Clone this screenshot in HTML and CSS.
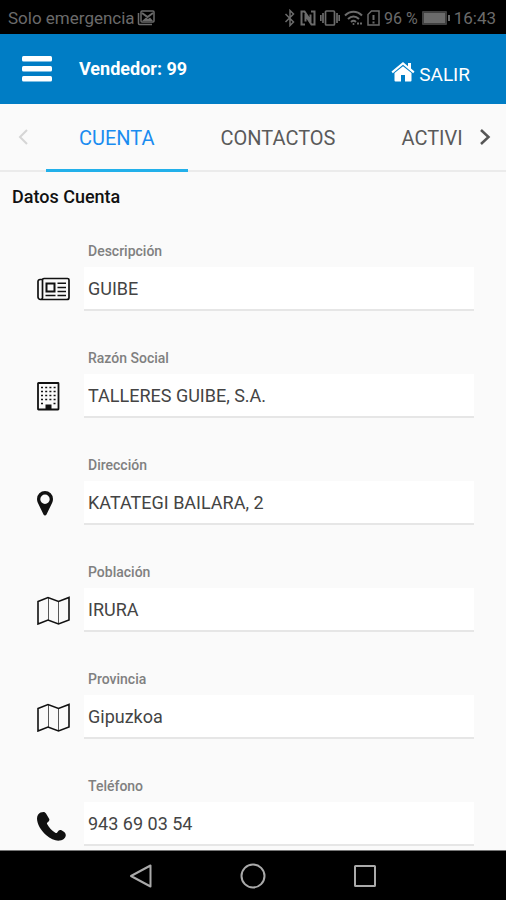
FILE: index.html
```html
<!DOCTYPE html>
<html lang="es">
<head>
<meta charset="utf-8">
<meta name="viewport" content="width=device-width, initial-scale=1">
<title>Datos Cuenta</title>
<link rel="stylesheet" href="styles.css">
</head>
<body>
<div class="status">
  <span>Solo emergencia</span>
  <svg class="status-mail" width="18" height="16" viewBox="0 0 18 16" fill="none" stroke="currentColor" stroke-width="1.500"><rect x="4" y="1" width="13" height="11" rx="1"/><path d="M1.500 3v10.500a1 1 0 0 0 1 1H15"/><path d="M5 3l5.500 4L16 3" stroke-width="2"/><path d="M5 11l4-3.500 2 1.500 2-1.500 3 3.500z" fill="currentColor" stroke="none"/></svg>
  <div class="status-right">
    <svg width="12" height="18" viewBox="0 0 12 18" fill="none" stroke="currentColor" stroke-width="1.500"><path d="M1.500 5l8 8L6 16.500v-15L9.500 5l-8 8"/></svg>
    <svg width="16" height="16" viewBox="0 0 16 16" fill="none" stroke="currentColor"><path d="M5 14.500H1.500v-13H4.500l6 9V4.500M11 1.500h3.500v13h-3l-6-9V11.500" stroke-width="2"/></svg>
    <svg width="20" height="16" viewBox="0 0 20 16" fill="none" stroke="currentColor" stroke-width="1.700"><rect x="5.500" y="1" width="9" height="14" rx="1"/><path d="M3 3v10M17 3v10M.8 5v6M19.200 5v6"/></svg>
    <svg width="19" height="16" viewBox="0 0 19 16" fill="none" stroke="currentColor" stroke-width="2"><path d="M1 5.500c5-5 12-5 17 0M4 9c3.500-3.500 7.500-3.500 11 0M7 12c2-1.800 3-1.800 5 0"/><circle cx="9.500" cy="14" r="1" fill="currentColor" stroke="none"/><path d="M13 13.500h2M16 13.500h2"/></svg>
    <svg width="13" height="16" viewBox="0 0 13 16" fill="none" stroke="currentColor" stroke-width="1.500"><path d="M4.500 1H12v14H1V4.500z"/><path d="M6.500 5v5M6.500 11.500v2" stroke-width="2"/></svg>
    <span class="battery-text">96 %</span>
    <svg class="battery" width="28" height="14" viewBox="0 0 28 14" fill="currentColor"><rect width="25" height="14" rx="1" opacity=".6"/><rect x="2" y="2" width="21" height="10"/><rect x="26" y="4" width="2" height="6"/></svg>
    <span>16:43</span>
  </div>
</div>
<header class="bar">
  <button class="menu" aria-label="Menú"><svg width="30" height="26" viewBox="0 0 30 26" fill="#fff"><rect y="0" width="30" height="5.500" rx="1.500"/><rect y="10" width="30" height="5.500" rx="1.500"/><rect y="20" width="30" height="5.500" rx="1.500"/></svg></button>
  <h1 class="seller">Vendedor: 99</h1>
  <a class="exit" href="#"><svg width="24" height="20" viewBox="0 0 24 20" fill="#fff"><path d="M12 4.200L3.500 11v7.500a1 1 0 0 0 1 1H10V13h4v6.500h5.500a1 1 0 0 0 1-1V11z"/><path d="M12 0L.5 9.600l1.300 1.600L12 2.800l10.200 8.400 1.300-1.600L20 6.600V1h-3v3.200z"/></svg><span>SALIR</span></a>
</header>
<nav class="tabs">
  <button class="arrow arrow-off" aria-label="Anterior"><svg width="12" height="18" viewBox="0 0 12 18" fill="none" stroke="currentColor" stroke-width="2"><path d="M10 2L3 9l7 7"/></svg></button>
  <div class="tab-list">
    <a class="tab tab-on" href="#">CUENTA</a>
    <a class="tab" href="#">CONTACTOS</a>
    <a class="tab" href="#">ACTIVI</a>
  </div>
  <button class="arrow arrow-next" aria-label="Siguiente"><svg width="12" height="18" viewBox="0 0 12 18" fill="none" stroke="currentColor" stroke-width="2.500"><path d="M2 2l7.500 7L2 16"/></svg></button>
</nav>
<main class="content">
  <h2 class="title">Datos Cuenta</h2>
  <form class="fields">
    <div class="field">
      <svg class="icon" width="33" height="24" viewBox="0 0 33 24" fill="none" stroke="currentColor"><path d="M5 2.500H3a2 2 0 0 0-2 2V20a2.500 2.500 0 0 0 2.500 2.500H30a2 2 0 0 0 2-2V3a1.500 1.500 0 0 0-1.500-1.500H7A1.500 1.500 0 0 0 5.500 3v17a2 2 0 0 1-2 2.500" stroke-width="1.700"/><rect x="9.500" y="6.500" width="8" height="8" stroke-width="2"/><path d="M20.500 6.200H29M20.500 10.500H29M20.500 14.500H29M8.500 18.500h10M20.500 18.500H29" stroke-width="1.500"/></svg>
      <label for="descripcion">Descripción</label>
      <input id="descripcion" type="text" value="GUIBE">
    </div>
    <div class="field">
      <svg class="icon" width="23" height="29" viewBox="0 0 23 29" fill="none" stroke="currentColor"><rect x="1" y="1" width="20.500" height="26.500" rx=".5" stroke-width="1.800"/><path d="M4 5.500h15M4 9.500h15M4 13.500h15M4 17.500h15" stroke-width="1.600" stroke-dasharray="2 2.200"/><path d="M4 21.500h3M16.500 21.500h3" stroke-width="1.600" stroke-dasharray="2 2"/><path d="M8.500 28v-5.500h6V28z" fill="currentColor" stroke="none"/></svg>
      <label for="razon">Razón Social</label>
      <input id="razon" type="text" value="TALLERES GUIBE, S.A.">
    </div>
    <div class="field">
      <svg class="icon" width="16" height="25" viewBox="0 0 16 25" fill="currentColor"><path fill-rule="evenodd" d="M8 0a8 8 0 0 0-8 8c0 1.500.3 2.600.8 3.700L6.500 23.500a1.700 1.700 0 0 0 3 0l5.700-11.800c.5-1.100.8-2.200.8-3.700a8 8 0 0 0-8-8zm0 3.600a4.700 4.700 0 1 1 0 9.400 4.700 4.700 0 0 1 0-9.400z"/></svg>
      <label for="direccion">Dirección</label>
      <input id="direccion" type="text" value="KATATEGI BAILARA, 2">
    </div>
    <div class="field">
      <svg class="icon" width="33" height="29" viewBox="0 0 33 29" fill="none" stroke="currentColor"><path d="M1 5.500L11 1.500l10.500 4 10.500-4V24l-10.500 4L11 24 1 28z" stroke-width="1.600"/><path d="M11.500 2v22M21.500 6v21.500" stroke-width=".7"/></svg>
      <label for="poblacion">Población</label>
      <input id="poblacion" type="text" value="IRURA">
    </div>
    <div class="field">
      <svg class="icon" width="33" height="29" viewBox="0 0 33 29" fill="none" stroke="currentColor"><path d="M1 5.500L11 1.500l10.500 4 10.500-4V24l-10.500 4L11 24 1 28z" stroke-width="1.600"/><path d="M11.500 2v22M21.500 6v21.500" stroke-width=".7"/></svg>
      <label for="provincia">Provincia</label>
      <input id="provincia" type="text" value="Gipuzkoa">
    </div>
    <div class="field">
      <svg class="icon" width="29" height="34" viewBox="0 -5 29 34" fill="currentColor"><path d="M3.500.6C1.500 1.500 0 3.700 0 6.500 0 12 4 18.500 9 23c5 4.300 10 6.300 14 5.600 3-.5 5.300-2.300 5.700-4.600.2-1.500-.2-3-1.500-4l-2.700-1.700c-1-.6-2.300-.4-3 .5l-1.300 1.700c-.5.600-1.200.7-1.900.3-3.400-2-6.400-5.100-8.200-8.700-.3-.7-.2-1.200.3-1.700l1.200-1c.8-.7 1-1.700.5-2.700L9 1.600C8.500.6 7.500 0 6.500 0c-1 0-2 .2-3 .6z"/></svg>
      <label for="telefono">Teléfono</label>
      <input id="telefono" type="tel" value="943 69 03 54">
    </div>
  </form>
</main>
<footer class="system-nav">
  <button aria-label="Atrás"><svg width="24" height="24" viewBox="0 0 24 24" fill="none" stroke="currentColor" stroke-width="2" stroke-linejoin="round"><path d="M21.500 1.500v21L2 12z"/></svg></button>
  <button aria-label="Inicio"><svg width="26" height="26" viewBox="0 0 26 26" fill="none" stroke="currentColor" stroke-width="2"><circle cx="13" cy="13" r="11.500"/></svg></button>
  <button aria-label="Recientes"><svg width="24" height="24" viewBox="0 0 24 24" fill="none" stroke="currentColor" stroke-width="2"><rect x="2" y="2" width="20" height="20" rx=".5"/></svg></button>
</footer>
</body>
</html>
```
FILE: styles.css
```css
* { box-sizing: border-box; }

body {
  margin: 0;
  height: 100vh;
  display: flex;
  flex-direction: column;
  background: #fafafa;
  color: #111;
  font-family: Roboto, "Liberation Sans", sans-serif;
}

button {
  display: flex;
  align-items: center;
  justify-content: center;
  padding: 0;
  border: 0;
  background: none;
  color: inherit;
}

a { color: inherit; text-decoration: none; }

svg { flex: none; display: block; }

.status {
  flex: none;
  display: flex;
  align-items: center;
  height: 34px;
  padding: 2px 10px 0 8px;
  background: #000;
  color: #6b6b6b;
  font-size: 17px;
}

.status-mail { margin-left: 2px; }

.status-right {
  display: flex;
  align-items: center;
  gap: 4px;
  margin-left: auto;
}

.battery-text { font-size: 16px; }

.bar {
  flex: none;
  display: flex;
  align-items: center;
  height: 70px;
  padding: 0 36px 0 22px;
  background: #007dc5;
  color: #fff;
}

.menu { width: 30px; height: 40px; }

.seller {
  margin: 0 0 0 27px;
  padding-bottom: 2px;
  font-size: 18px;
  font-weight: 700;
}

.exit {
  display: flex;
  align-items: center;
  gap: 4px;
  margin-left: auto;
  padding-top: 10px;
  font-size: 19px;
}

.exit svg { margin-bottom: 4px; }

.tabs {
  flex: none;
  display: flex;
  height: 68px;
  color: #5a5a5a;
}

.arrow {
  flex: none;
  width: 46px;
  color: #555;
  border-bottom: 2px solid #ebebeb;
}

.arrow-off { color: #d5d5d5; }

.arrow-next { width: 43px; }

.tab-list {
  flex: 1;
  display: flex;
  min-width: 0;
  overflow: hidden;
  box-shadow: inset 0 -2px #ebebeb;
}

.tab {
  flex: none;
  padding: 0 33px;
  font-size: 20px;
  line-height: 68px;
}

.tab-on {
  color: #1a8cf0;
  border-bottom: 3px solid #22b0ea;
}

.content {
  flex: 1;
  min-height: 0;
  overflow-y: auto;
  scrollbar-width: none;
  padding: 13px 32px 38px 12px;
}

.title {
  margin: 0 0 34px;
  font-size: 18px;
  font-weight: 500;
  line-height: 24px;
}

.fields {
  display: flex;
  flex-direction: column;
  gap: 39px;
  padding-left: 25px;
}

.field {
  display: grid;
  grid-template-columns: 47px 1fr;
  row-gap: 8px;
}

.field label {
  grid-column: 2;
  grid-row: 1;
  padding-left: 4px;
  color: #808080;
  font-size: 14px;
  font-weight: 500;
  line-height: 16px;
}

.field input {
  grid-column: 2;
  grid-row: 2;
  width: 100%;
  height: 44px;
  padding: 0 4px;
  border: 0;
  border-bottom: 2px solid #e6e6e6;
  border-radius: 0;
  background: #fff;
  color: #444;
  font: 400 18px Roboto, "Liberation Sans", sans-serif;
}

.icon {
  grid-column: 1;
  grid-row: 2;
  align-self: center;
}

.system-nav {
  flex: none;
  display: flex;
  align-items: center;
  justify-content: center;
  gap: 87px;
  height: 50px;
  border-top: 1px solid #777;
  background: #000;
  color: #aaa;
}
```
